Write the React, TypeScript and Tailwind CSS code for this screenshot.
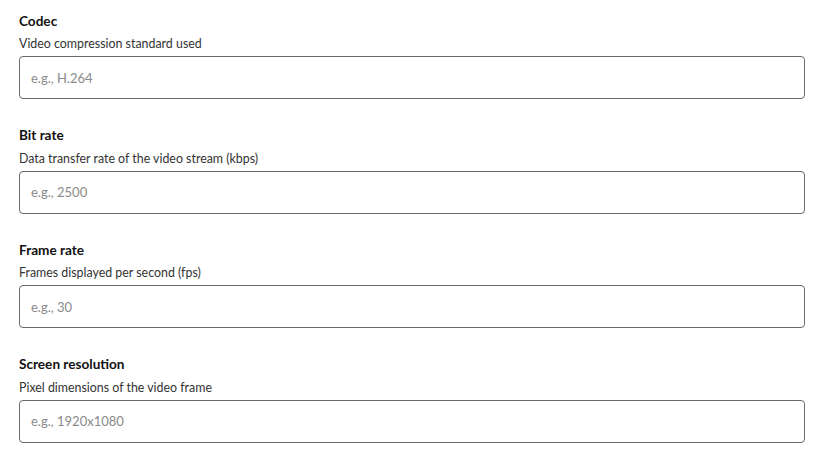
const fields = [
  { label: 'Codec', hint: 'Video compression standard used', placeholder: 'e.g., H.264' },
  { label: 'Bit rate', hint: 'Data transfer rate of the video stream (kbps)', placeholder: 'e.g., 2500' },
  { label: 'Frame rate', hint: 'Frames displayed per second (fps)', placeholder: 'e.g., 30' },
  { label: 'Screen resolution', hint: 'Pixel dimensions of the video frame', placeholder: 'e.g., 1920x1080' },
];

export default function App() {
  return (
    <div
      className="min-h-screen bg-white pl-[19px] pr-[18px] pt-[10.5px] flex flex-col gap-[26.17px]"
      style={{ fontFamily: 'Lato, "Noto Sans", sans-serif' }}
    >
      {fields.map(f => (
        <div key={f.label} className="flex flex-col">
          <label className="text-[13.6px] font-bold leading-[20px] text-[#111]">{f.label}</label>
          <p className="mt-[4.5px] text-[12.4px] leading-[18px] text-[#333]">{f.hint}</p>
          <input
            placeholder={f.placeholder}
            className="mt-[3px] h-[43px] w-full rounded-[4px] border border-[#6b6b6b] px-[11px] text-[13px] text-[#111] placeholder:text-[#8a8a8a] focus:outline-none"
          />
        </div>
      ))}
    </div>
  );
}
